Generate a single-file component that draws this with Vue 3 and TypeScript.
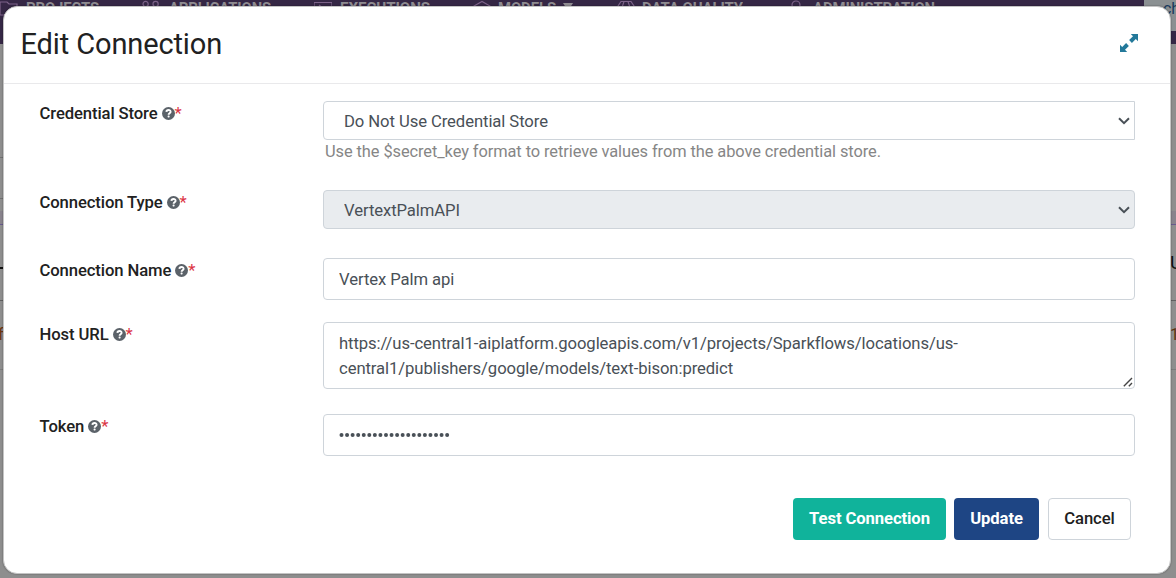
<script setup lang="ts">
import { ref } from 'vue'

interface NavItem {
  label: string
  icon: string
  left: number
  textWidth: number
  gap: number
}

const navItems: NavItem[] = [
  { label: 'PROJECTS', icon: 'M0 15V2h7l2 2h8v11z', left: 0, textWidth: 73, gap: 8 },
  { label: 'APPLICATIONS', icon: 'M1 4a2.6 2.6 0 1 1 5.2 0a2.6 2.6 0 1 1-5.2 0M11 4a2.6 2.6 0 1 1 5.2 0a2.6 2.6 0 1 1-5.2 0M1 12h5v4H1zM11 12h5v4h-5z', left: 142, textWidth: 102, gap: 9 },
  { label: 'EXECUTIONS', icon: 'M0 16V2.5h18V16zM5 5l4 3-4 3', left: 314, textWidth: 90, gap: 8 },
  { label: 'MODELS', icon: 'M1 6l8-4.5L17 6v8l-8 4-8-4z', left: 473, textWidth: 58, gap: 7 },
  { label: 'DATA QUALITY', icon: 'M1 6l3-4.5h10L17 6l-8 11zM7 1.500L5.500 6v4M11 1.500L12.500 6v4', left: 617, textWidth: 101, gap: 7 },
  { label: 'ADMINISTRATION', icon: 'M5 5a4 4 0 1 1 8 0a4 4 0 1 1-8 0M2 17c0-8 14-8 14 0', left: 787, textWidth: 122, gap: 8 },
]

const store = ref('Do Not Use Credential Store')
const connectionType = ref('VertextPalmAPI')
const connectionName = ref('Vertex Palm api')
const hostUrl = ref(
  'https://us-central1-aiplatform.googleapis.com/v1/projects/Sparkflows/locations/us-central1/publishers/google/models/text-bison:predict',
)
const tokenDots = 20

const labels = ['Credential Store', 'Connection Type', 'Connection Name', 'Host URL', 'Token']
</script>

<template>
  <div class="screen">
    <div class="nav">
      <div v-for="item in navItems" :key="item.label" class="nav-item" :style="{ left: item.left + 'px', gap: item.gap + 'px' }">
        <svg width="18" height="18" viewBox="0 0 18 18"><path :d="item.icon" /></svg>
        <svg class="nav-label" :width="item.textWidth" height="18">
          <text x="0" y="13" :textLength="item.textWidth" lengthAdjust="spacingAndGlyphs">{{ item.label }}</text>
        </svg>
        <svg v-if="item.label === 'MODELS'" class="caret" width="10" height="12" viewBox="0 0 10 12"><path d="M0 3h10L5 11z" /></svg>
      </div>
      <div class="search"><span>ch</span></div>
    </div>
    <i class="band"></i>
    <i class="rule r1"></i><i class="rule r2"></i><i class="rule r3"></i><i class="rule r4"></i>
    <i class="rule r5"></i><i class="rule r6"></i>
    <span class="peek peek-left">f</span>
    <span class="peek peek-u">U</span>
    <span class="peek peek-one">1</span>

    <section class="modal">
      <header>
        <h1>Edit Connection</h1>
        <svg class="expand" width="18" height="18" viewBox="0 0 18 18">
          <path d="M10.800 0H18v7.200l-2.200-2.200-3.900 3.900-2.800-2.800L13 2.200zM7.200 18H0v-7.200L2.200 13l3.900-3.900 2.800 2.800L5 15.800z" />
        </svg>
      </header>

      <form @submit.prevent>
        <div v-for="(label, i) in labels" :key="label" class="row" :class="'row-' + i">
          <label>
            <span>{{ label }}</span>
            <svg class="help" width="13" height="13" viewBox="0 0 13 13">
              <circle cx="6.500" cy="6.500" r="6.500" />
              <path d="M4.400 4.900C4.500 2.400 8.700 2.400 8.600 4.900C8.500 6.300 6.600 6.200 6.600 7.700" />
              <rect x="5.600" y="8.600" width="2" height="1.900" rx=".7" />
            </svg>
            <b>*</b>
          </label>
          <div class="field">
            <template v-if="i < 2">
              <div class="select-wrap">
                <select v-if="i === 0" v-model="store" class="control square"><option>Do Not Use Credential Store</option></select>
                <select v-else v-model="connectionType" class="control" disabled><option>VertextPalmAPI</option></select>
                <svg class="chevron" width="12" height="8" viewBox="0 0 12 8"><path d="M1 1.300l5 4.900 5-4.900" /></svg>
              </div>
              <small v-if="i === 0">Use the $secret_key format to retrieve values from the above credential store.</small>
            </template>
            <input v-else-if="i === 2" v-model="connectionName" class="control" type="text" />
            <div v-else-if="i === 3" class="area-wrap">
              <textarea v-model="hostUrl" class="control" spellcheck="false"></textarea>
              <svg class="grip" width="10" height="10" viewBox="0 0 10 10"><path d="M.8 9.200L9 1M5.800 9.200L9 6" /></svg>
            </div>
            <div v-else class="control token">
              <svg width="112" height="6" viewBox="0 0 112 6">
                <circle v-for="n in tokenDots" :key="n" :cx="2.5 + (n - 1) * 5.56" cy="3" r="2" />
              </svg>
            </div>
          </div>
        </div>
        <footer>
          <button class="test">Test Connection</button>
          <button class="update">Update</button>
          <button class="cancel">Cancel</button>
        </footer>
      </form>
    </section>
  </div>
</template>

<style>
html,
body {
  margin: 0;
  overflow: hidden;
}
</style>

<style scoped>
* {
  box-sizing: border-box;
}
.screen {
  position: relative;
  width: 1176px;
  height: 578px;
  overflow: hidden;
  background: #8e8e8e;
  font-family: Roboto, "Liberation Sans", sans-serif;
  font-size: 16.67px;
  line-height: 25px;
  letter-spacing: -0.085px;
  color: #212529;
}
.nav {
  position: relative;
  height: 44px;
  background: #352745;
}
.nav-item {
  position: absolute;
  top: 0;
  display: flex;
}
.nav-item svg {
  fill: none;
  stroke: #7d6389;
  stroke-width: 1.2;
}
.nav-label text {
  fill: #8f8c91;
  stroke: none;
  font-size: 14px;
  font-weight: 700;
}
.nav-item .caret {
  fill: #8f8c91;
  stroke: none;
}
.search {
  position: absolute;
  left: 1144px;
  top: 0;
  width: 32px;
  height: 31px;
  background: #8b9092;
  border-bottom-left-radius: 12px;
}
.search span {
  position: absolute;
  left: 19px;
  top: -4px;
  color: #193a5d;
  font-size: 16px;
}
.rule {
  position: absolute;
  left: 0;
  width: 1176px;
  height: 1px;
  background: #707070;
}
.r1 { top: 157px; width: 4px; }
.r2 { top: 198px; width: 4px; }
.r3 { top: 224px; background: #685a8e; }
.r4 { top: 267px; width: 4px; height: 2px; background: #111; }
.r5 { top: 300px; background: #606060; }
.r6 { top: 369px; background: #7c7c7c; }
.band {
  position: absolute;
  left: 0;
  top: 211px;
  width: 1176px;
  height: 13px;
  background: #88838c;
}
.peek {
  position: absolute;
}
.peek-left { left: -2px; top: 322px; color: #6c3510; }
.peek-u { left: 1170px; top: 250px; color: #111; font-size: 19px; }
.peek-one { left: 1170px; top: 322px; color: #5b3210; }
.modal {
  position: absolute;
  left: 3px;
  top: 6px;
  width: 1168px;
  height: 568px;
  background: #fff;
  border: 1px solid #c4c4c4;
  border-radius: 14px;
  box-shadow: 0 0 1px 1px rgba(0, 0, 0, 0.12);
}
header {
  display: flex;
  justify-content: space-between;
  align-items: flex-start;
  height: 77px;
  padding: 18px 32px 0 16.5px;
  border-bottom: 1px solid #e9e9eb;
}
h1 {
  margin: 0;
  font-size: 29px;
  line-height: 38px;
  font-weight: 400;
  letter-spacing: -0.12px;
  color: #212121;
}
.expand {
  margin-top: 9px;
  fill: #23799a;
}
form {
  padding: 17px 35px 0 35.5px;
}
.row {
  display: flex;
}
.row-0 { height: 89px; }
.row-1 { height: 68px; }
.row-2 { height: 64px; }
.row-3 { height: 92px; }
.row-4 { height: 84px; }
label {
  display: flex;
  align-items: flex-start;
  width: 283.5px;
  font-weight: 500;
  letter-spacing: -0.11px;
  color: #212121;
  white-space: nowrap;
}
.help {
  margin: 6px 0 0 4px;
  fill: #5b6269;
}
.help path {
  fill: none;
  stroke: #fff;
  stroke-width: 1.9;
}
.help rect {
  fill: #fff;
}
label b {
  font-weight: 400;
  color: #dc3545;
}
.field {
  flex: none;
  width: 812px;
}
.control {
  display: block;
  width: 100%;
  height: 42px;
  margin: 0;
  padding: 0 15px;
  border: 1px solid #ced4da;
  border-radius: 4px;
  outline: none;
  background: #fff;
  color: #495057;
  font: inherit;
  letter-spacing: inherit;
  opacity: 1;
}
.select-wrap,
.area-wrap {
  position: relative;
}
select.control {
  appearance: none;
  height: 39px;
  padding: 2px 20px 0;
}
select:disabled {
  background: #e9ecef;
}
.square {
  border-radius: 4px 0 0 4px;
}
.chevron {
  position: absolute;
  right: 5px;
  top: 16px;
  fill: none;
  stroke: #495057;
  stroke-width: 2;
}
small {
  display: block;
  padding-left: 2px;
  font-size: 16.4px;
  line-height: 24px;
  letter-spacing: -0.075px;
  color: #868686;
}
textarea.control {
  height: 67px;
  padding-top: 8px;
  resize: none;
  overflow: hidden;
}
.grip {
  position: absolute;
  right: 2px;
  bottom: 2px;
  fill: none;
  stroke: #444;
  stroke-width: 1.4;
}
.token {
  padding-top: 17px;
}
.token svg {
  display: block;
  fill: #495057;
}
footer {
  display: flex;
  justify-content: flex-end;
  padding-right: 4px;
}
button {
  height: 42px;
  padding: 0 0 2px;
  border: 1px solid transparent;
  border-radius: 4px;
  color: #fff;
  font: inherit;
  font-weight: 500;
  letter-spacing: -0.1px;
}
.test {
  width: 153px;
  margin-right: 8px;
  background: #10b39b;
  font-weight: 700;
}
.update {
  width: 85px;
  margin-right: 9px;
  background: #1e4584;
  font-weight: 700;
}
.cancel {
  width: 83px;
  background: #fff;
  border-color: #ced4da;
  color: #212121;
}
</style>
